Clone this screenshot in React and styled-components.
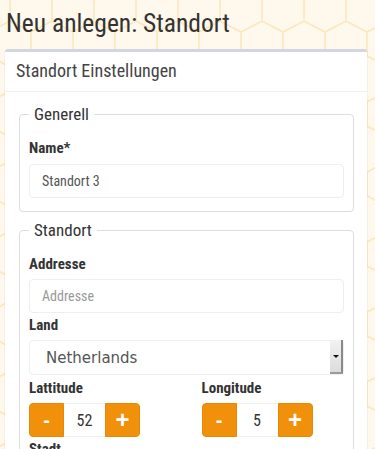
import React from 'react';
import styled, { createGlobalStyle } from 'styled-components';

const honeycomb = encodeURIComponent(
  `<svg xmlns="http://www.w3.org/2000/svg" width="42" height="70"><path d="M0 0 L21 11 L42 0 M21 11 V35 L0 46 V70 M21 35 L42 46 V70" fill="none" stroke="#fde7bd" stroke-width="1.6"/></svg>`
);

const GlobalStyle = createGlobalStyle`
  html, body {
    margin: 0;
    padding: 0;
  }
  body {
    min-height: 100vh;
    background-color: #fff8ec;
    background-image: url("data:image/svg+xml,${honeycomb}");
    background-position: 10px 21px;
    font-family: "Roboto Condensed", Roboto, "Liberation Sans", sans-serif;
    color: #333;
  }
`;

const Page = styled.div`
  padding: 0 8px 0 5px;
`;

const Title = styled.h1`
  margin: 0;
  padding: 8px 0 11px 1px;
  font-size: 25.5px;
  font-weight: 400;
  line-height: 30px;
  color: #333;
`;

const Card = styled.div`
  background: #fff;
  border-top: 3px solid #d2d6de;
  border-radius: 3px;
  box-shadow: 0 1px 2px rgba(0, 0, 0, 0.12);
`;

const CardHeader = styled.div`
  padding: 8px 11px 10px;
  border-bottom: 1px solid #f0f0f0;
  font-size: 18px;
  line-height: 21px;
  color: #444;
`;

const CardBody = styled.div`
  padding: 12px 13px 0 14px;
`;

const Fieldset = styled.fieldset`
  margin: 0 0 8px;
  padding: 0 9px 13px;
  border: 1px solid #ddd;
  border-radius: 4px;
`;

const Legend = styled.legend`
  padding: 0 5px;
  font-size: 17px;
  line-height: 20px;
  color: #333;
`;

const Label = styled.label`
  display: block;
  margin: ${p => p.$top ?? 1}px 0 ${p => p.$bottom ?? 4}px;
  font-size: 15px;
  font-weight: 700;
  line-height: 22px;
  color: #333;
`;

const TextInput = styled.input`
  box-sizing: border-box;
  display: block;
  width: 100%;
  height: 34px;
  padding: 0 12px;
  border: 1px solid #eee;
  border-radius: 4px;
  font-family: inherit;
  font-size: 14px;
  color: #555;
  outline: none;

  &::placeholder {
    color: #999;
  }
`;

const SelectWrap = styled.div`
  position: relative;
`;

const Select = styled.select`
  box-sizing: border-box;
  display: block;
  width: 100%;
  height: 35px;
  padding: 0 0 0 16px;
  border: 1px solid #eee;
  border-radius: 4px;
  background: #fff;
  appearance: none;
  font-family: "DejaVu Sans", sans-serif;
  font-size: 15px;
  color: #555;
  outline: none;
`;

const SelectArrow = styled.span`
  position: absolute;
  top: 0;
  right: 1px;
  bottom: 1px;
  width: 13px;
  box-sizing: border-box;
  background: linear-gradient(#f2f2f2, #dcdcdc);
  border-right: 2px solid #8a8a8a;
  border-bottom: 2px solid #9a9a9a;
  display: flex;
  align-items: center;
  justify-content: center;
  pointer-events: none;

  &::after {
    content: '';
    border-left: 3px solid transparent;
    border-right: 3px solid transparent;
    border-top: 3px solid #111;
  }
`;

const Row = styled.div`
  display: grid;
  grid-template-columns: 1fr 1fr;
  column-gap: 30px;
`;

const Spinner = styled.div`
  display: flex;
  width: 111px;
  height: 34px;
`;

const StepButton = styled.button`
  width: 35px;
  flex: none;
  padding: 0;
  border: 1px solid #e48a06;
  background: #f0900b;
  color: #fff;
  font-family: "Liberation Sans", Arial, sans-serif;
  font-size: ${p => (p.$plus ? 24 : 20)}px;
  font-weight: 700;
  line-height: 1;
  border-radius: ${p => (p.$plus ? '0 4px 4px 0' : '4px 0 0 4px')};
  cursor: pointer;
`;

const StepValue = styled.input`
  box-sizing: border-box;
  width: 41px;
  flex: none;
  padding: 0;
  border: 1px solid #eee;
  border-left: 0;
  border-right: 0;
  text-align: center;
  font-family: inherit;
  font-size: 16px;
  color: #333;
  outline: none;
`;

function NumberField({ value }) {
  return (
    <Spinner>
      <StepButton type="button">-</StepButton>
      <StepValue type="text" defaultValue={value} />
      <StepButton type="button" $plus>+</StepButton>
    </Spinner>
  );
}

export default function App() {
  return (
    <>
      <GlobalStyle />
      <Page>
        <Title>Neu anlegen: Standort</Title>
        <Card>
          <CardHeader>Standort Einstellungen</CardHeader>
          <CardBody>
            <Fieldset>
              <Legend>Generell</Legend>
              <Label $top={13} $bottom={5}>Name*</Label>
              <TextInput type="text" defaultValue="Standort 3" />
            </Fieldset>
            <Fieldset>
              <Legend>Standort</Legend>
              <Label $top={13}>Addresse</Label>
              <TextInput type="text" placeholder="Addresse" />
              <Label>Land</Label>
              <SelectWrap>
                <Select defaultValue="nl">
                  <option value="de">Germany</option>
                  <option value="nl">Netherlands</option>
                  <option value="be">Belgium</option>
                </Select>
                <SelectArrow />
              </SelectWrap>
              <Row>
                <div>
                  <Label $top={2}>Lattitude</Label>
                  <NumberField value="52" />
                </div>
                <div>
                  <Label $top={2}>Longitude</Label>
                  <NumberField value="5" />
                </div>
              </Row>
              <Label>Stadt</Label>
              <TextInput type="text" placeholder="Stadt" />
            </Fieldset>
          </CardBody>
        </Card>
      </Page>
    </>
  );
}
